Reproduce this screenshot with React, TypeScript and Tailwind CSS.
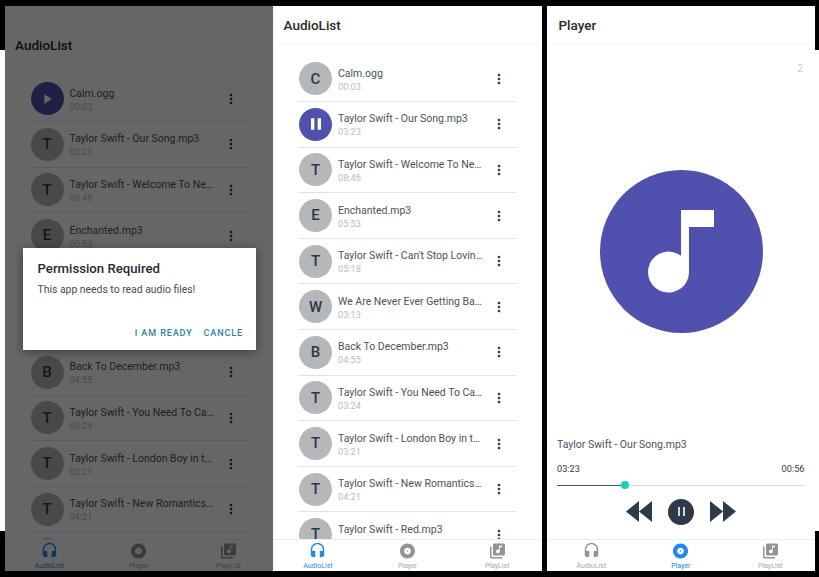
import React from 'react';
import {
  MdAlbum,
  MdHeadset,
  MdLibraryMusic,
  MdMoreVert,
  MdPause,
  MdPlayArrow,
} from 'react-icons/md';

type Track = { title: string; time: string; letter: string };

const tracks: Track[] = [
  { title: 'Calm.ogg', time: '00:03', letter: 'C' },
  { title: 'Taylor Swift - Our Song.mp3', time: '03:23', letter: 'T' },
  { title: 'Taylor Swift - Welcome To New York.mp3', time: '08:46', letter: 'T' },
  { title: 'Enchanted.mp3', time: '05:53', letter: 'E' },
  { title: "Taylor Swift - Can't Stop Loving You.mp3", time: '05:18', letter: 'T' },
  { title: 'We Are Never Ever Getting Back Together.mp3', time: '03:13', letter: 'W' },
  { title: 'Back To December.mp3', time: '04:55', letter: 'B' },
  { title: 'Taylor Swift - You Need To Calm Down.mp3', time: '03:24', letter: 'T' },
  { title: 'Taylor Swift - London Boy in the City.mp3', time: '03:21', letter: 'T' },
  { title: 'Taylor Swift - New Romantics Forever.mp3', time: '04:21', letter: 'T' },
  { title: 'Taylor Swift - Red.mp3', time: '03:43', letter: 'T' },
];

const Row = ({ track, state }: { track: Track; state?: 'play' | 'pause' }) => (
  <div className="h-[45.6px] shrink-0 flex items-center border-b border-[#e2e3e5] w-[218px] ml-[25px] pl-px">
    {state ? (
      <div className="w-[33px] h-[33px] rounded-full bg-[#5050ae] flex items-center justify-center text-white">
        {state === 'play' ? <MdPlayArrow size={16} /> : <MdPause size={20} />}
      </div>
    ) : (
      <div className="w-[33px] h-[33px] rounded-full bg-[#b5b7ba] flex items-center justify-center text-[15px] font-medium text-[#2d3748]">
        {track.letter}
      </div>
    )}
    <div className="ml-[6px] w-[146px] pt-[2px] leading-none">
      <div className="truncate text-[10.5px] leading-[12px] text-[#4a5260]">{track.title}</div>
      <div className="text-[9.2px] leading-[10px] text-[#bcbcbc] mt-[2px]">{track.time}</div>
    </div>
    <MdMoreVert size={16} className="ml-[7px] text-[#2d3748]" />
  </div>
);

const TabBar = ({ active }: { active: number }) => {
  const tabs = [
    { label: 'AudioList', Icon: MdHeadset },
    { label: 'Player', Icon: MdAlbum },
    { label: 'PlayList', Icon: MdLibraryMusic },
  ];
  return (
    <div className="h-[32px] shrink-0 bg-white border-t border-[#eeeeee] flex relative z-10">
      {tabs.map(({ label, Icon }, i) => (
        <div
          key={label}
          className={`flex-1 flex flex-col items-center pt-[2px] ${i === active ? 'text-[#1e88f0]' : 'text-[#a8a8a8]'}`}
        >
          <Icon size={19} className={i === active ? '' : 'text-[#949494]'} />
          <span className="text-[7px] leading-[9px] mt-[2px]">{label}</span>
        </div>
      ))}
    </div>
  );
};

const ListPanel = ({ activeRow, state, statusBar }: { activeRow: number; state: 'play' | 'pause'; statusBar?: boolean }) => (
  <div className="flex-1 h-full flex flex-col bg-white overflow-hidden">
    <div
      className={`shrink-0 box-content h-[35px] pt-[2px] flex items-center pl-[10.5px] text-[13.5px] font-medium text-[#2a2a2a] ${
        statusBar ? 'mt-[20px]' : 'border-b border-[#f6f6f6]'
      }`}
    >
      AudioList
    </div>
    <div className={`flex-1 min-h-0 overflow-hidden ${statusBar ? 'pt-[13.5px]' : 'pt-[12.5px]'}`}>
      {tracks.map((t, i) => (
        <Row key={t.title} track={t} state={i === activeRow ? state : undefined} />
      ))}
    </div>
    <TabBar active={0} />
  </div>
);

const PlayerPanel = () => (
  <div className="flex-1 h-full flex flex-col bg-white">
    <div className="shrink-0 box-content h-[35px] pt-[2px] border-b border-[#f6f6f6] flex items-center pl-[12px] text-[13.5px] font-medium text-[#2a2a2a]">
      Player
    </div>
    <div className="flex-1 min-h-0 flex flex-col">
      <div className="text-right pr-[12px] pt-[20px] text-[10px] leading-none text-[#c8c8c8]">2</div>
      <div className="flex justify-center pl-[2px] mt-[96px]">
        <svg width="163" height="163" viewBox="0 0 163 163">
          <circle cx="81.5" cy="81.5" r="81.5" fill="#5050ae" />
          <path d="M81 40h33v17H89v45a20.5 20.5 0 1 1-8-16.2z" fill="#ffffff" />
        </svg>
      </div>
      <div className="mt-[107px] px-[10.5px] text-[10.5px] leading-none text-[#4a5260]">Taylor Swift - Our Song.mp3</div>
      <div className="mt-[13px] px-[10.5px] flex justify-between text-[9.2px] leading-none text-[#333c48]">
        <span>03:23</span>
        <span>00:56</span>
      </div>
      <div className="mt-[12px] mx-[10.5px] h-[1px] bg-[#d8d8e4] relative">
        <div className="h-full w-[68px] bg-[#555555]" />
        <div className="absolute left-[64px] top-[-3.5px] w-[8px] h-[8px] rounded-full bg-[#12d1bd]" />
      </div>
      <div className="mt-[13px] pl-[1px] flex items-center justify-center gap-[16px] text-[#2d3a4a]">
        <svg width="26" height="21" viewBox="0 0 26 21" fill="currentColor">
          <path d="M13 0v21L0 10.5zM26 0v21L13 10.5z" />
        </svg>
        <div className="w-[26px] h-[26px] rounded-full bg-[#2d3a4a] flex items-center justify-center gap-[3px]">
          <div className="w-[2px] h-[9px] bg-[#d5d8dc]" />
          <div className="w-[2px] h-[9px] bg-[#d5d8dc]" />
        </div>
        <svg width="26" height="21" viewBox="0 0 26 21" fill="currentColor">
          <path d="M0 0v21l13-10.5zM13 0v21l13-10.5z" />
        </svg>
      </div>
    </div>
    <TabBar active={1} />
  </div>
);

const Gutter = () => (
  <div className="w-[4.5px] h-full flex flex-col shrink-0">
    <div className="h-[44px] bg-black" />
    <div className="flex-1 bg-white" />
    <div className="h-[40px] bg-black" />
  </div>
);

export default function App() {
  return (
    <div className="w-[819px] h-[577px] bg-black py-[6px] flex overflow-hidden font-['Roboto',sans-serif]">
      <Gutter />
      <div className="w-[268.5px] h-full flex relative shrink-0">
        <ListPanel activeRow={0} state="play" statusBar />
        <div className="absolute inset-0 z-20 bg-black/60" />
        <div className="absolute z-30 left-[18px] top-[242px] w-[233px] h-[102px] bg-white shadow-[0_2px_10px_rgba(0,0,0,0.4)] flex flex-col">
          <div className="pl-[15px] pt-[13px] text-[13.2px] leading-[16px] font-medium text-[#2a2a2a]">Permission Required</div>
          <div className="pl-[15px] pt-[6px] text-[10.4px] leading-[14px] text-[#4a4a4a]">This app needs to read audio files!</div>
          <div className="mt-auto pb-[11px] pr-[12.5px] flex justify-end gap-[11px] text-[9px] leading-[12px] font-medium tracking-[0.9px] text-[#2f7ea8]">
            <span>I AM READY</span>
            <span>CANCLE</span>
          </div>
        </div>
      </div>
      <div className="w-[269px] h-full flex shrink-0">
        <ListPanel activeRow={1} state="pause" />
      </div>
      <div className="w-[4.5px] h-full shrink-0 bg-black" />
      <div className="w-[268.5px] h-full flex shrink-0">
        <PlayerPanel />
      </div>
      <Gutter />
    </div>
  );
}
